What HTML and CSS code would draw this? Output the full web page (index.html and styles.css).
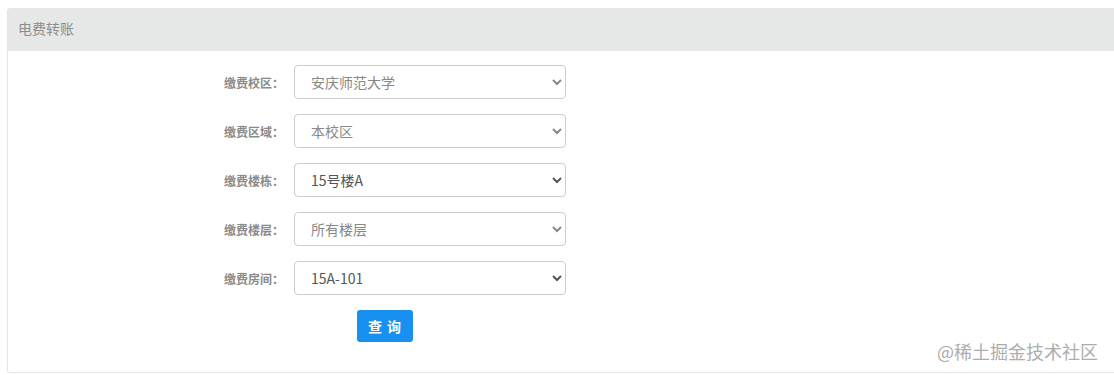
FILE: index.html
```html
<!DOCTYPE html>
<html lang="zh">
<head>
<meta charset="utf-8">
<title>电费转账</title>
<link rel="stylesheet" href="styles.css">
</head>
<body>
<div class="panel">
  <div class="panel-head">电费转账</div>
  <div class="panel-body">
    <form class="form">
      <div class="row">
        <label class="label">缴费校区：</label>
        <select class="select"><option>安庆师范大学</option></select>
      </div>
      <div class="row">
        <label class="label">缴费区域：</label>
        <select class="select"><option>本校区</option></select>
      </div>
      <div class="row">
        <label class="label">缴费楼栋：</label>
        <select class="select dark"><option>15号楼A</option></select>
      </div>
      <div class="row">
        <label class="label">缴费楼层：</label>
        <select class="select"><option>所有楼层</option></select>
      </div>
      <div class="row">
        <label class="label">缴费房间：</label>
        <select class="select dark"><option>15A-101</option></select>
      </div>
      <div class="actions">
        <button type="button" class="btn">查 询</button>
      </div>
    </form>
    <div class="watermark">@稀土掘金技术社区</div>
  </div>
</div>
</body>
</html>
```

FILE: styles.css
```css
html, body {
  margin: 0;
  padding: 0;
  overflow: hidden;
  background: #fff;
}
body {
  padding: 8px 0 0 7px;
  font-family: "Noto Sans CJK SC", "Noto Sans", sans-serif;
}
.panel {
  width: 1120px;
  height: 365px;
  box-sizing: border-box;
  border: 1px solid #e6e6e6;
  border-radius: 3px;
  box-shadow: 0 1px 2px rgba(0,0,0,0.06);
  display: flex;
  flex-direction: column;
}
.panel-head {
  height: 42px;
  background: #e6e8e8;
  color: #8c8c8c;
  font-size: 14px;
  line-height: 38px;
  padding-left: 10px;
  flex: none;
}
.panel-body {
  flex: 1;
  position: relative;
  padding-top: 14px;
}
.form {
  display: flex;
  flex-direction: column;
}
.row {
  display: flex;
  align-items: center;
  height: 34px;
  margin-bottom: 15px;
}
.label {
  width: 276px;
  text-align: right;
  font-size: 12px;
  font-weight: bold;
  color: #8a8a8a;
  margin-right: 10px;
}
.select {
  width: 272px;
  height: 34px;
  box-sizing: border-box;
  border: 1px solid #cccccc;
  border-radius: 4px;
  background: #fff;
  font-family: "Noto Sans CJK SC", "Noto Sans", sans-serif;
  font-size: 14px;
  color: #888;
  padding: 0 12px;
}
.select.dark {
  color: #555;
}
.actions {
  display: flex;
  padding-left: 349px;
}
.btn {
  width: 56px;
  height: 32px;
  border: none;
  border-radius: 3px;
  background: #1890f2;
  color: #fff;
  font-family: "Noto Sans CJK SC", "Noto Sans", sans-serif;
  font-size: 14px;
  font-weight: bold;
  letter-spacing: 1px;
  padding: 0;
}
.watermark {
  position: absolute;
  left: 929px;
  bottom: 8px;
  font-size: 18px;
  color: #adadad;
}
```
